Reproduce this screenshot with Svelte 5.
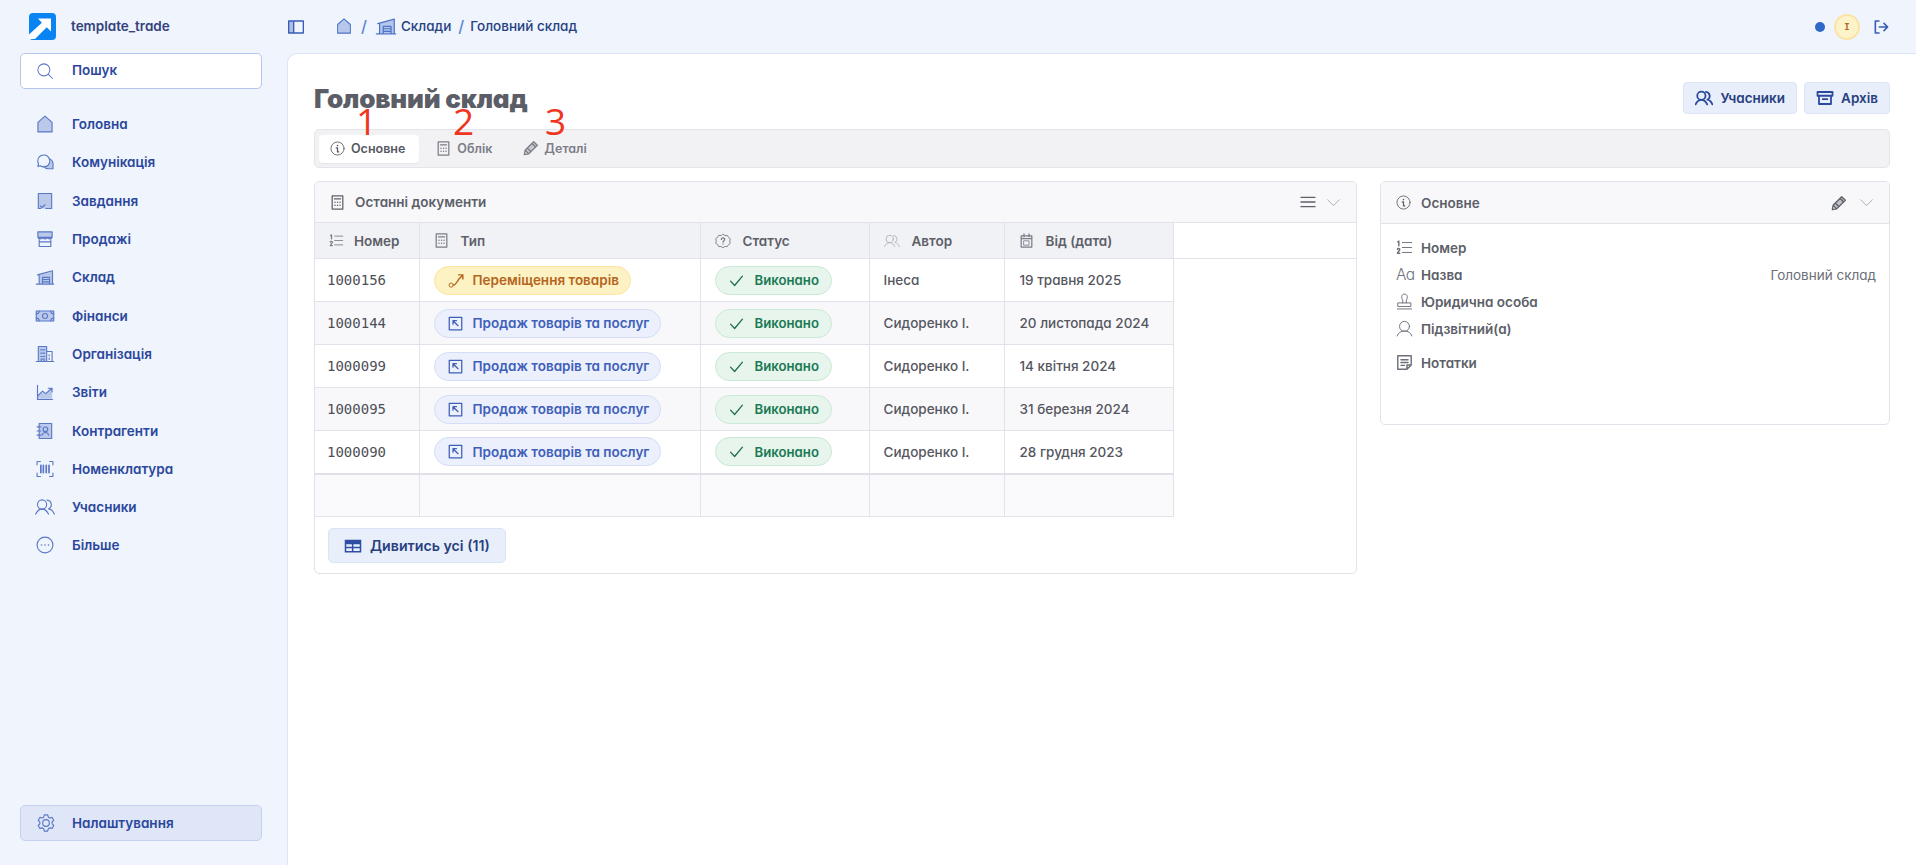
<script>
  const I = {
    home: '<path class="f" d="M3.500 21.500V10L12 2.500l8.500 7.500v11.500z"/><path d="M3.500 21.500V10L12 2.500l8.500 7.500v11.500z"/>',
    chat: '<path class="f" d="M21.500 13.500c0-2-1-3.700-2.600-4.800.5 4.700-3.600 8.500-8.400 8 1.100 1.800 3.100 3 5.400 3h5.600v-5z"/><path d="M10.500 3.500a7.200 7.200 0 0 0-7.200 7.200c0 1.300.3 2.400.9 3.500l-.8 3.100 3-.8a7.200 7.200 0 1 0 4.100-13z"/><path d="M17 8c2.700 1 4.600 3.400 4.600 6.300v5.800H16c-2.500 0-4.600-1.200-5.700-3"/>',
    task: '<path class="f" d="M4 3h16v18H4z"/><path d="M7 21H4V3h16v18h-7M6.500 18l2 2 3.500-3.500"/>',
    store: '<path class="f" d="M3 3.500h18V10H3z"/><path d="M3.500 3.500h17V10h-17zM5 10v11h14V10M3.500 10c.5 2.500 5 2.500 5.700 0 .7 2.500 4.900 2.500 5.600 0 .7 2.500 5.200 2.500 5.700 0M5 15.500h14"/>',
    ware: '<path class="f" d="M5 20V9L21 5v15z"/><path d="M1.500 20.500h21M3 9.500l18-5v16M5 20.500V9M9 20.500v-8h8.500v8M9 15h8.500M9 17.800h8.500"/>',
    money: '<path class="f" d="M1.500 6h21v12h-21z"/><path d="M1.500 6h21v12h-21z"/><circle cx="12" cy="12" r="3"/><path d="M1.500 9.500A3.500 3.500 0 0 0 5 6M19 6a3.500 3.500 0 0 0 3.500 3.500M22.500 14.500A3.500 3.500 0 0 0 19 18M5 18a3.500 3.500 0 0 0-3.500-3.500"/>',
    org: '<path class="f" d="M4 3h10v18H4z"/><path d="M1.500 21h21M4 21V3h10v18M14 9h6.500v12M7 7h1.500M10 7h1.500M7 11h1.500M10 11h1.500M7 15h1.500M10 15h1.500M7.500 21v-3h3.500v3M17 13v1.500M17 17v1.500"/>',
    chart: '<path class="f" d="M3.500 16l5-5 4 3 8-7v13h-17z"/><path d="M3 4v17h18M4 16l5-5 4 3 7-6.500M16 7.500h4.500V12"/>',
    book: '<path class="f" d="M5 3h15v18H5z"/><path d="M5 3h15v18H5zM2.500 7H7M2.500 12H7M2.500 17H7"/><circle cx="12.500" cy="10" r="2.800"/><path d="M8.500 17c.7-2 2.200-3.200 4-3.200s3.300 1.200 4 3.200"/>',
    bar: '<path d="M6.500 3H2.500v4M17.500 3h4v4M6.500 21H2.500v-4M17.500 21h4v-4"/><path class="thick" d="M7 7.500v9M10 7.500v9M13.500 7.500v9M16.800 7.500v9"/>',
    users: '<circle cx="8.500" cy="9" r="5.500"/><path d="M.8 20.500c1.500-3.300 4.200-6 7.700-6s6.200 2.700 7.700 6M14.500 3.800a5.500 5.500 0 0 1 1.800 10.500c3.100.3 5.500 3.100 6.900 6.200"/>',
    usersb: '<circle class="thick2" cx="8.500" cy="9" r="5.500"/><path class="thick2" d="M.8 20.500c1.500-3.300 4.200-6 7.700-6s6.200 2.700 7.700 6M14.500 3.800a5.500 5.500 0 0 1 1.800 10.500c3.100.3 5.500 3.100 6.900 6.200"/>',
    more: '<circle cx="12" cy="12" r="9.500"/><circle class="d" cx="7.800" cy="12" r="1"/><circle class="d" cx="12" cy="12" r="1"/><circle class="d" cx="16.200" cy="12" r="1"/>',
    gear: '<circle cx="12" cy="12" r="4"/><path d="M10 2.300h4l.8 2.700 1.800 1 2.700-.7 2 3.500-2 2 .1 2.200 1.900 2-2 3.500-2.700-.7-1.800 1-.8 2.900h-4l-.8-2.900-1.800-1-2.700.7-2-3.500 1.900-2V10.800l-1.900-2 2-3.500 2.700.7 1.800-1z"/>',
    search: '<circle cx="10.500" cy="10.500" r="8"/><path d="M16.500 16.500l5.500 5.500"/>',
    info: '<circle cx="12" cy="12" r="10.500"/><circle class="d" cx="12" cy="7.300" r="1.300"/><path class="thick" d="M10 11h2v6.500h2"/>',
    calc: '<path d="M3.500 1.500h17v21h-17z" class="thick"/><path class="thick" d="M7 6h10"/><circle class="d" cx="8" cy="11.500" r="1.200"/><circle class="d" cx="12" cy="11.500" r="1.200"/><circle class="d" cx="16" cy="11.500" r="1.200"/><circle class="d" cx="8" cy="16.500" r="1.200"/><circle class="d" cx="12" cy="16.500" r="1.200"/><circle class="d" cx="16" cy="16.500" r="1.200"/>',
    pencil: '<path class="f" d="M3.200 15.500L16 2.500l5.500 5.500L8.500 20.800z"/><path class="thick" d="M2 22l1.200-6.500L16 2.500l5.500 5.500L8.500 20.800zM13.500 5l5.500 5.500M3.200 15.500l5.300 5.300M6.500 12l5.500 5.500"/>',
    num: '<path d="M9 5h13M9 12h13M9 19h13"/><path class="thick" d="M2.500 4L4 3v6.500M2 14.500c.5-1.500 3.500-1.300 3.300.5-.1 1.200-2.300 2.500-3.300 5h3.500"/>',
    ask: '<path d="M12 2l3 1.800 3.500-.2 1.700 3 2.800 2-1 3.400 1 3.400-2.800 2-1.700 3-3.500-.2L12 22l-3-1.800-3.500.2-1.700-3-2.800-2 1-3.400-1-3.400 2.800-2 1.700-3 3.500.2z"/><path class="thick" d="M9.500 9.500c.3-3 5-3 5 0 0 2-2.500 2-2.500 4"/><circle class="d" cx="12" cy="16.500" r="1"/>',
    cal: '<path class="thick" d="M3.500 4.500h17v18h-17zM3.500 9h17M8 1.500v4.500M16 1.500v4.500"/><path d="M8 12.500h8v7H8z"/>',
    menu: '<path class="thick" d="M1.500 5h21M1.500 12h21M1.500 19h21"/>',
    chev: '<path d="M2.500 7.500l9.500 9.500 9.500-9.500"/>',
    stamp: '<path d="M2 22.500h20M3 14h18v5H3zM9.500 14V10C7 7 7.500 1.500 12 1.500S17 7 14.500 10v4"/>',
    user: '<circle cx="12" cy="9" r="7"/><path d="M1.500 22.500c1.500-4.500 5.500-7 10.500-7s9 2.500 10.500 7"/>',
    note: '<path class="thick" d="M2.500 2.500h19v13l-6 6h-13zM15.500 21.500v-6h6M7 8h10M7 12h10M7 16h5"/>',
    check: '<path class="thick" d="M2.500 13l6.500 7L21.500 5"/>',
    route: '<circle cx="4.500" cy="18.500" r="3"/><path class="thick" d="M7.500 18.500c5.500 0 4-7.500 13-13.500M15 4h6v6"/>',
    arrow: '<path class="thick" d="M2 2h20v20H2z"/><path class="thick" d="M8 7.500h5.500M8 7.500V13M8 7.500l8 8"/>',
    table: '<path class="solid" d="M1 3.500h22v17H1z"/><path class="cut" d="M3 9.500h7.500v3.500H3zM12.500 9.500H21v3.500h-8.500zM3 15h7.500v3.500H3zM12.500 15H21v3.500h-8.500z"/>',
    archive: '<path class="thick2" d="M2 4h20v5H2zM4 9v11h16V9M9 13.500h6"/>',
    out: '<path class="thick2" d="M9 3H3.500v18H9M9.500 12H22M16.500 6.500L22 12l-5.500 5.500"/>',
    side: '<path class="thick" d="M1 3h22v18H1zM8.500 3v18"/><path class="f" d="M1 3h7.500v18H1z"/>'
  };
  const nav = [
    ['Головна','home'],['Комунікація','chat'],['Завдання','task'],['Продажі','store'],['Склад','ware'],['Фінанси','money'],
    ['Організація','org'],['Звіти','chart'],['Контрагенти','book'],['Номенклатура','bar'],['Учасники','users'],['Більше','more']
  ];
  const rows = [
    ['1000156','move','Інеса','19 травня 2025'],
    ['1000144','sale','Сидоренко І.','20 листопада 2024'],
    ['1000099','sale','Сидоренко І.','14 квітня 2024'],
    ['1000095','sale','Сидоренко І.','31 березня 2024'],
    ['1000090','sale','Сидоренко І.','28 грудня 2023']
  ];
  const details = [['Номер','num'],['Назва',null,'Головний склад'],['Юридична особа','stamp'],['Підзвітний(а)','user']];
</script>

{#snippet icon(name, cls = '')}
  <svg class={'ic ' + cls} viewBox="0 0 24 24" aria-hidden="true">{@html I[name]}</svg>
{/snippet}

<div class="app">
  <aside class="side">
    <div class="brand">
      <svg class="logo" viewBox="0 0 27 27" aria-hidden="true">
        <rect width="27" height="27" rx="4" fill="#0b84f3"/>
        <path d="M9 5.500h13v13l-4.300-4.200L6 26H0v-4.500L12.900 9.700z" fill="#fff"/>
      </svg>
      <span>template_trade</span>
    </div>
    <div class="search">{@render icon('search','s18')}<span>Пошук</span></div>
    <nav>
      {#each nav as [label, ic]}
        <div class="nav-item">{@render icon(ic,'s20')}<span>{label}</span></div>
      {/each}
    </nav>
    <div class="settings">{@render icon('gear','s20')}<span>Налаштування</span></div>
  </aside>

  <div class="right">
    <header class="top">
      <button class="iconbtn">{@render icon('side','s16')}</button>
      <div class="crumbs">
        {@render icon('home','s18')}
        <i>/</i>
        {@render icon('ware','s22')}
        <span>Склади</span>
        <i class="tight">/</i>
        <span>Головний склад</span>
      </div>
      <div class="status">
        <b class="dot"></b>
        <b class="avatar">I</b>
        {@render icon('out','s16')}
      </div>
    </header>

    <main class="panel">
      <div class="title-row">
        <h1>Головний склад</h1>
        <div class="actions">
          <button class="btn">{@render icon('usersb','s18')}Учасники</button>
          <button class="btn">{@render icon('archive','s18')}Архів</button>
        </div>
      </div>

      <div class="tabs">
        <div class="tab active">{@render icon('info','s15')}Основне</div>
        <div class="tab">{@render icon('calc','s15')}Облік</div>
        <div class="tab">{@render icon('pencil','s16')}Деталі</div>
        <em class="mark m1">1</em>
        <em class="mark m2">2</em>
        <em class="mark m3">3</em>
      </div>

      <div class="cols">
        <section class="card">
          <div class="card-head">
            {@render icon('calc','s15')}
            <span class="grow">Останні документи</span>
            {@render icon('menu','s16')}
            {@render icon('chev','s15 light')}
          </div>
          <table>
            <colgroup><col class="c1"/><col class="c2"/><col class="c3"/><col class="c4"/><col class="c5"/><col/></colgroup>
            <thead>
              <tr>
                <th><div class="first">{@render icon('num','s15')}Номер</div></th>
                <th><div>{@render icon('calc','s15')}Тип</div></th>
                <th><div>{@render icon('ask','s16')}Статус</div></th>
                <th><div>{@render icon('users','s16 light')}Автор</div></th>
                <th><div>{@render icon('cal','s15')}Від (дата)</div></th>
                <th class="fill"></th>
              </tr>
            </thead>
            <tbody>
              {#each rows as [id, kind, author, date]}
                <tr>
                  <td class="mono">{id}</td>
                  <td>
                    {#if kind === 'move'}
                      <span class="pill yellow">{@render icon('route','s17')}Переміщення товарів</span>
                    {:else}
                      <span class="pill blue">{@render icon('arrow','s15')}Продаж товарів та послуг</span>
                    {/if}
                  </td>
                  <td><span class="pill green">{@render icon('check','s15')}Виконано</span></td>
                  <td>{author}</td>
                  <td class="date">{date}</td>
                  <td class="fill"></td>
                </tr>
              {/each}
              <tr class="foot"><td></td><td></td><td></td><td></td><td></td><td class="fill"></td></tr>
            </tbody>
          </table>
          <button class="btn more">{@render icon('table','s18')}Дивитись усі (11)</button>
        </section>

        <section class="card info">
          <div class="card-head tall">
            {@render icon('info','s15')}
            <span class="grow">Основне</span>
            {@render icon('pencil','s16')}
            {@render icon('chev','s15 light')}
          </div>
          <div class="details">
            {#each details as [label, ic, value]}
              <div class="drow">
                {#if ic}{@render icon(ic,'s17')}{:else}<span class="aa">Aa</span>{/if}
                <span class="grow">{label}</span>
                {#if value}<span class="val">{value}</span>{/if}
              </div>
            {/each}
            <div class="drow notes">{@render icon('note','s17')}<span>Нотатки</span></div>
          </div>
        </section>
      </div>
    </main>
  </div>
</div>

<style>
  :global(body) { margin: 0; overflow: hidden; background: #eff4fd; }
  :global(svg.ic *) { fill: none; stroke: currentColor; stroke-width: 1.35; stroke-linejoin: round; stroke-linecap: round; }
  :global(svg.ic .f) { fill: currentColor; fill-opacity: .35; stroke: none; }
  :global(svg.ic .d) { fill: currentColor; stroke: none; }
  :global(svg.ic .thick) { stroke-width: 2; }
  :global(svg.ic .thick2) { stroke-width: 2.4; }
  :global(svg.ic .solid) { fill: currentColor; stroke: none; }
  :global(svg.ic .cut) { fill: #e8eefa; stroke: none; }

  .app {
    display: grid;
    grid-template-columns: 287px 1fr;
    height: 865px;
    font-family: Inter, "Noto Sans", sans-serif;
    font-feature-settings: "cv11" 1;
    font-size: 13.5px;
    font-weight: 500;
    color: #5d5f69;
  }
  .ic { flex: none; display: block; }
  .s15 { width: 15px; height: 15px; }
  .s16 { width: 16px; height: 16px; }
  .s17 { width: 17px; height: 17px; }
  .s18 { width: 18px; height: 18px; }
  .s20 { width: 20px; height: 20px; }
  .s22 { width: 22px; height: 22px; }
  .light { opacity: .55; }
  .grow { flex: 1; }
  button { font: inherit; cursor: pointer; }

  .side { display: flex; flex-direction: column; padding: 0 24px 24px 20px; box-sizing: border-box; height: 865px; width: 286px; }
  .brand { height: 53px; display: flex; align-items: center; gap: 15px; padding-left: 9px; font-size: 13.5px; font-weight: 600; color: #33427c; }
  .brand span { padding-bottom: 2px; }
  .logo { width: 27px; height: 27px; display: block; }
  .search {
    height: 36px; box-sizing: border-box; background: #fff; border: 1px solid #b5c7ee; border-radius: 5px;
    display: flex; align-items: center; gap: 18px; padding-left: 15px;
    color: #2b479c; font-weight: 600;
  }
  .search span { padding-bottom: 2px; }
  .search .ic { color: #5a78c6; }
  nav { margin-top: 16px; display: flex; flex-direction: column; }
  .nav-item { height: 38.3px; display: flex; align-items: center; gap: 17px; padding-left: 15px; color: #2b479c; font-weight: 600; }
  .nav-item .ic, .settings .ic { color: #5a78c6; }
  .settings {
    margin-top: auto; height: 36px; box-sizing: border-box; background: #dfe6f7; border: 1px solid #c4d2f0; border-radius: 5px;
    display: flex; align-items: center; gap: 16px; padding-left: 15px; color: #2b479c; font-weight: 600;
  }

  .right { display: flex; flex-direction: column; min-width: 0; }
  .top { height: 53px; display: flex; align-items: center; padding: 0 27px 0 1px; flex: none; color: #3a5cb5; }
  .iconbtn { background: none; border: 0; padding: 0; color: #3a5cb5; }
  .crumbs { margin-left: 31px; padding-bottom: 2px; display: flex; align-items: center; gap: 4px; color: #25417f; font-weight: 500; font-size: 13.5px; }
  .crumbs > .ic { color: #4d74c8; }
  .crumbs i { font-style: normal; color: #5a86cf; margin: 0 4px; font-size: 16px; }
  .crumbs i.tight { margin: 0 2px 0 3px; }
  .status { margin-left: auto; display: flex; align-items: center; gap: 0; }
  .dot { width: 10px; height: 10px; border-radius: 50%; background: #2f68c8; }
  .avatar {
    width: 26px; height: 26px; box-sizing: border-box; margin: 0 13px 0 9px; border-radius: 50%;
    background: #fdf3c8; border: 2px solid #fbe3a6; color: #b5651d;
    font-family: "DejaVu Sans Mono", monospace; font-size: 9px; font-weight: 700;
    display: flex; align-items: center; justify-content: center;
  }

  .panel {
    flex: 1; background: #fff; border: 1px solid #dbe5f7; border-width: 1px 0 0 1px; border-top-left-radius: 10px;
    padding: 28px 26px 0 26px; position: relative;
  }
  .title-row { display: flex; justify-content: space-between; align-items: flex-start; height: 47px; }
  h1 { margin: 0; font-size: 26px; line-height: 34px; font-weight: 900; color: #5b5d67; letter-spacing: -.2px; }
  .actions { display: flex; gap: 7px; }
  .btn {
    height: 32px; box-sizing: border-box; display: inline-flex; align-items: center; gap: 7px; padding: 0 11px;
    background: #e8eefa; border: 1px solid #dbe4f6; border-radius: 4px; color: #27407f; font-weight: 600; font-size: 13.5px;
  }
  .btn .ic { color: #2b4a9e; }
  .tabs {
    position: relative; height: 39px; box-sizing: border-box; background: #f2f2f4; border: 1px solid #e4e5ea; border-radius: 5px;
    display: flex; align-items: center; gap: 6px; padding: 0 4px;
  }
  .tab { display: flex; align-items: center; gap: 6px; height: 28px; padding: 0 14px 1px 11px; box-sizing: border-box; font-size: 12.5px; font-weight: 600; color: #7b7d88; border-radius: 4px; }
  .tab:last-of-type { gap: 5px; margin-left: 0; }
  .tab.active { background: #fff; color: #565862; box-shadow: 0 1px 2px rgba(0,0,0,.06); }
  .mark { position: absolute; top: -31px; font: 400 37px/44px "Open Sans", sans-serif; color: #f0361f; pointer-events: none; }
  .m1 { left: 41px; } .m2 { left: 138px; } .m3 { left: 230px; }

  .cols { display: grid; grid-template-columns: 1043px 1fr; gap: 23px; margin-top: 13px; align-items: start; }
  .card { border: 1px solid #e2e3ea; border-radius: 5px; overflow: hidden; background: #fff; }
  .card-head {
    height: 40px; display: flex; align-items: center; gap: 10px; padding: 0 15px 0 15px; background: #f8f8fb;
    font-weight: 600; color: #5d5f69;
  }
  .card-head.tall { height: 41px; border-bottom: 1px solid #e2e3ea; gap: 12px; }
  .card-head.tall .grow { margin-left: -2px; }
  table { width: 100%; border-collapse: collapse; table-layout: fixed; }
  .c1 { width: 104px; } .c2 { width: 281px; } .c3 { width: 169px; } .c4 { width: 135px; } .c5 { width: 169px; }
  th { height: 36px; padding: 0 14px; background: #f1f2f5; border: 1px solid #e2e3ea; border-left: 0; font-weight: 600; text-align: left; color: #5d5f69; box-sizing: border-box; }
  th.fill { background: #fff; border-right: 0; }
  th > div { display: flex; align-items: center; gap: 12px; }
  th > div.first { gap: 10px; }
  th .ic { color: #7b7d88; }
  td { height: 43px; padding: 0 14px; border: 1px solid #e2e3ea; border-left: 0; box-sizing: border-box; font-size: 13.5px; font-weight: 500; color: #55575f; }
  td.date { padding-left: 15px; padding-right: 0; }
  td.fill { border: 0; background: #fff; }
  tbody tr:nth-child(even) td:not(.fill) { background: #f8f8fb; }
  .mono { font-family: "DejaVu Sans Mono", monospace; font-size: 14px; font-weight: 400; color: #4d4f57; padding-left: 12px; }
  tbody tr.foot td:not(.fill) { height: 42px; background: #fafafc; border-top: 2px solid #e0e1e8; }
  tbody tr.foot td.fill { background: #fff; border: 0; }
  .pill {
    display: inline-flex; align-items: center; gap: 10px; height: 29px; box-sizing: border-box; padding: 0 11px 0 13px; border-radius: 15px;
    border: 1px solid; font-weight: 600; font-size: 13.5px; vertical-align: middle;
  }
  .yellow { background: #fdf2c4; border-color: #fbe3a0; color: #b5651d; gap: 8px; }
  .blue { background: #ebf0fc; border-color: #d3def6; color: #3f5fb8; }
  .green { background: #e7f5ec; border-color: #c9e9d5; color: #1b7a55; gap: 11px; padding-right: 12px; font-size: 13.2px; }
  .green .ic { color: #1e6a52; }
  .more { display: flex; margin: 11px 0 10px 13px; height: 35px; padding: 0 15px; gap: 8px; border-radius: 5px; font-size: 14.2px; }
  .more .ic { color: #2f4ea3; }

  .details { padding: 10px 13px 0 15px; height: 200px; box-sizing: border-box; }
  .drow { display: flex; align-items: center; gap: 8px; height: 27px; font-weight: 600; color: #5d5f69; }
  .drow .ic { color: #6d6f7a; }
  .aa { width: 17px; font-weight: 300; font-size: 15.5px; color: #6d6f7a; letter-spacing: -.5px; white-space: nowrap; }
  .val { font-weight: 400; color: #6d6f7a; }
  .notes { margin-top: 7px; }
</style>
